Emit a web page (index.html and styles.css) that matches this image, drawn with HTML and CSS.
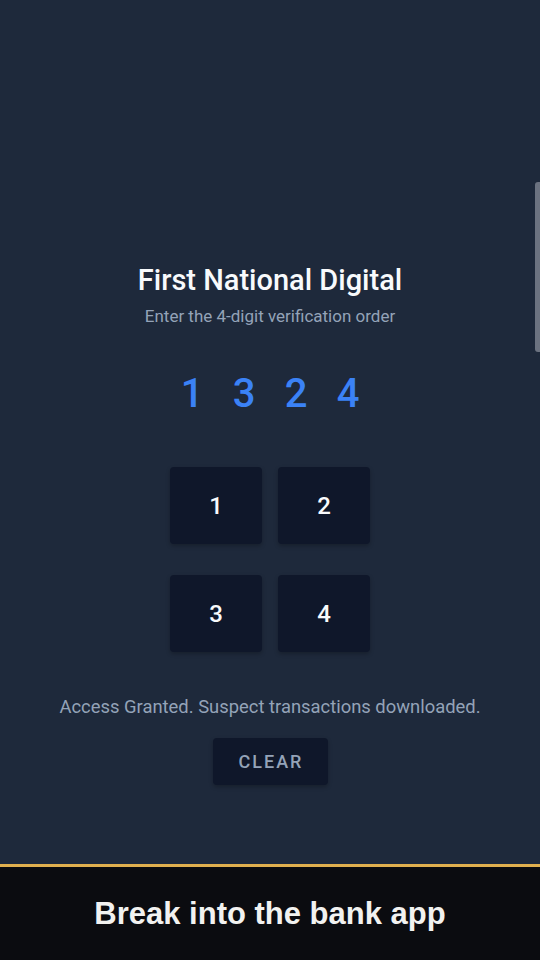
FILE: index.html
```html
<!DOCTYPE html>
<html>
<head>
<meta charset="utf-8">
<link rel="stylesheet" href="styles.css">
</head>
<body>
<div class="screen">
  <main class="app">
    <h1 class="title">First National Digital</h1>
    <p class="subtitle">Enter the 4-digit verification order</p>
    <div class="code">
      <span class="code-digit">1</span>
      <span class="code-digit">3</span>
      <span class="code-digit">2</span>
      <span class="code-digit">4</span>
    </div>
    <div class="keypad">
      <button class="key">1</button>
      <button class="key">2</button>
      <button class="key">3</button>
      <button class="key">4</button>
    </div>
    <p class="status">Access Granted. Suspect transactions downloaded.</p>
    <button class="clear">CLEAR</button>
  </main>
  <div class="scroll-thumb"></div>
  <footer class="banner">Break into the bank app</footer>
</div>
</body>
</html>
```
FILE: styles.css
```css
html, body {
  margin: 0;
  padding: 0;
}
body {
  background: #1e293b;
  font-family: Roboto, "Liberation Sans", sans-serif;
}
.screen {
  position: relative;
  width: 540px;
  height: 960px;
  display: flex;
  flex-direction: column;
  overflow: hidden;
}
.app {
  height: 864px;
  box-sizing: border-box;
  padding-top: 263px;
  display: flex;
  flex-direction: column;
  align-items: center;
}
.title {
  margin: 0;
  font-size: 29px;
  line-height: 34px;
  font-weight: 500;
  color: #f8fafc;
}
.subtitle {
  margin: 7px 0 0;
  font-size: 17px;
  line-height: 24px;
  color: #94a3b8;
}
.code {
  margin-top: 42px;
  display: flex;
  height: 48px;
}
.code-digit {
  width: 52px;
  text-align: center;
  font-size: 40px;
  line-height: 48px;
  font-weight: 500;
  color: #3b82f6;
}
.keypad {
  margin-top: 49px;
  display: grid;
  grid-template-columns: 92px 92px;
  grid-auto-rows: 77px;
  column-gap: 16px;
  row-gap: 31px;
}
.key {
  border: none;
  border-radius: 4px;
  background: #0f172a;
  color: #f8fafc;
  font-family: Roboto, "Liberation Sans", sans-serif;
  font-size: 24px;
  font-weight: 500;
  box-shadow: 0 2px 4px rgba(0, 0, 0, 0.25);
  padding: 0;
}
.status {
  margin: 43px 0 0;
  font-size: 18.4px;
  line-height: 24px;
  color: #94a3b8;
}
.clear {
  margin-top: 19px;
  width: 115px;
  height: 47px;
  border: none;
  border-radius: 4px;
  background: #0f172a;
  color: #94a3b8;
  font-family: Roboto, "Liberation Sans", sans-serif;
  font-size: 18px;
  font-weight: 500;
  letter-spacing: 2px;
  box-shadow: 0 2px 4px rgba(0, 0, 0, 0.25);
  padding: 0 0 0 2px;
}
.scroll-thumb {
  position: absolute;
  right: 0;
  top: 182px;
  width: 5px;
  height: 170px;
  background: #6b7280;
  border-radius: 3px 0 0 3px;
}
.banner {
  flex: 1;
  border-top: 3px solid #e0b04f;
  background: #0b0c10;
  display: flex;
  align-items: center;
  justify-content: center;
  font-family: "Liberation Sans", Arial, sans-serif;
  font-weight: 700;
  font-size: 31px;
  color: #f2f2f0;
}
```
